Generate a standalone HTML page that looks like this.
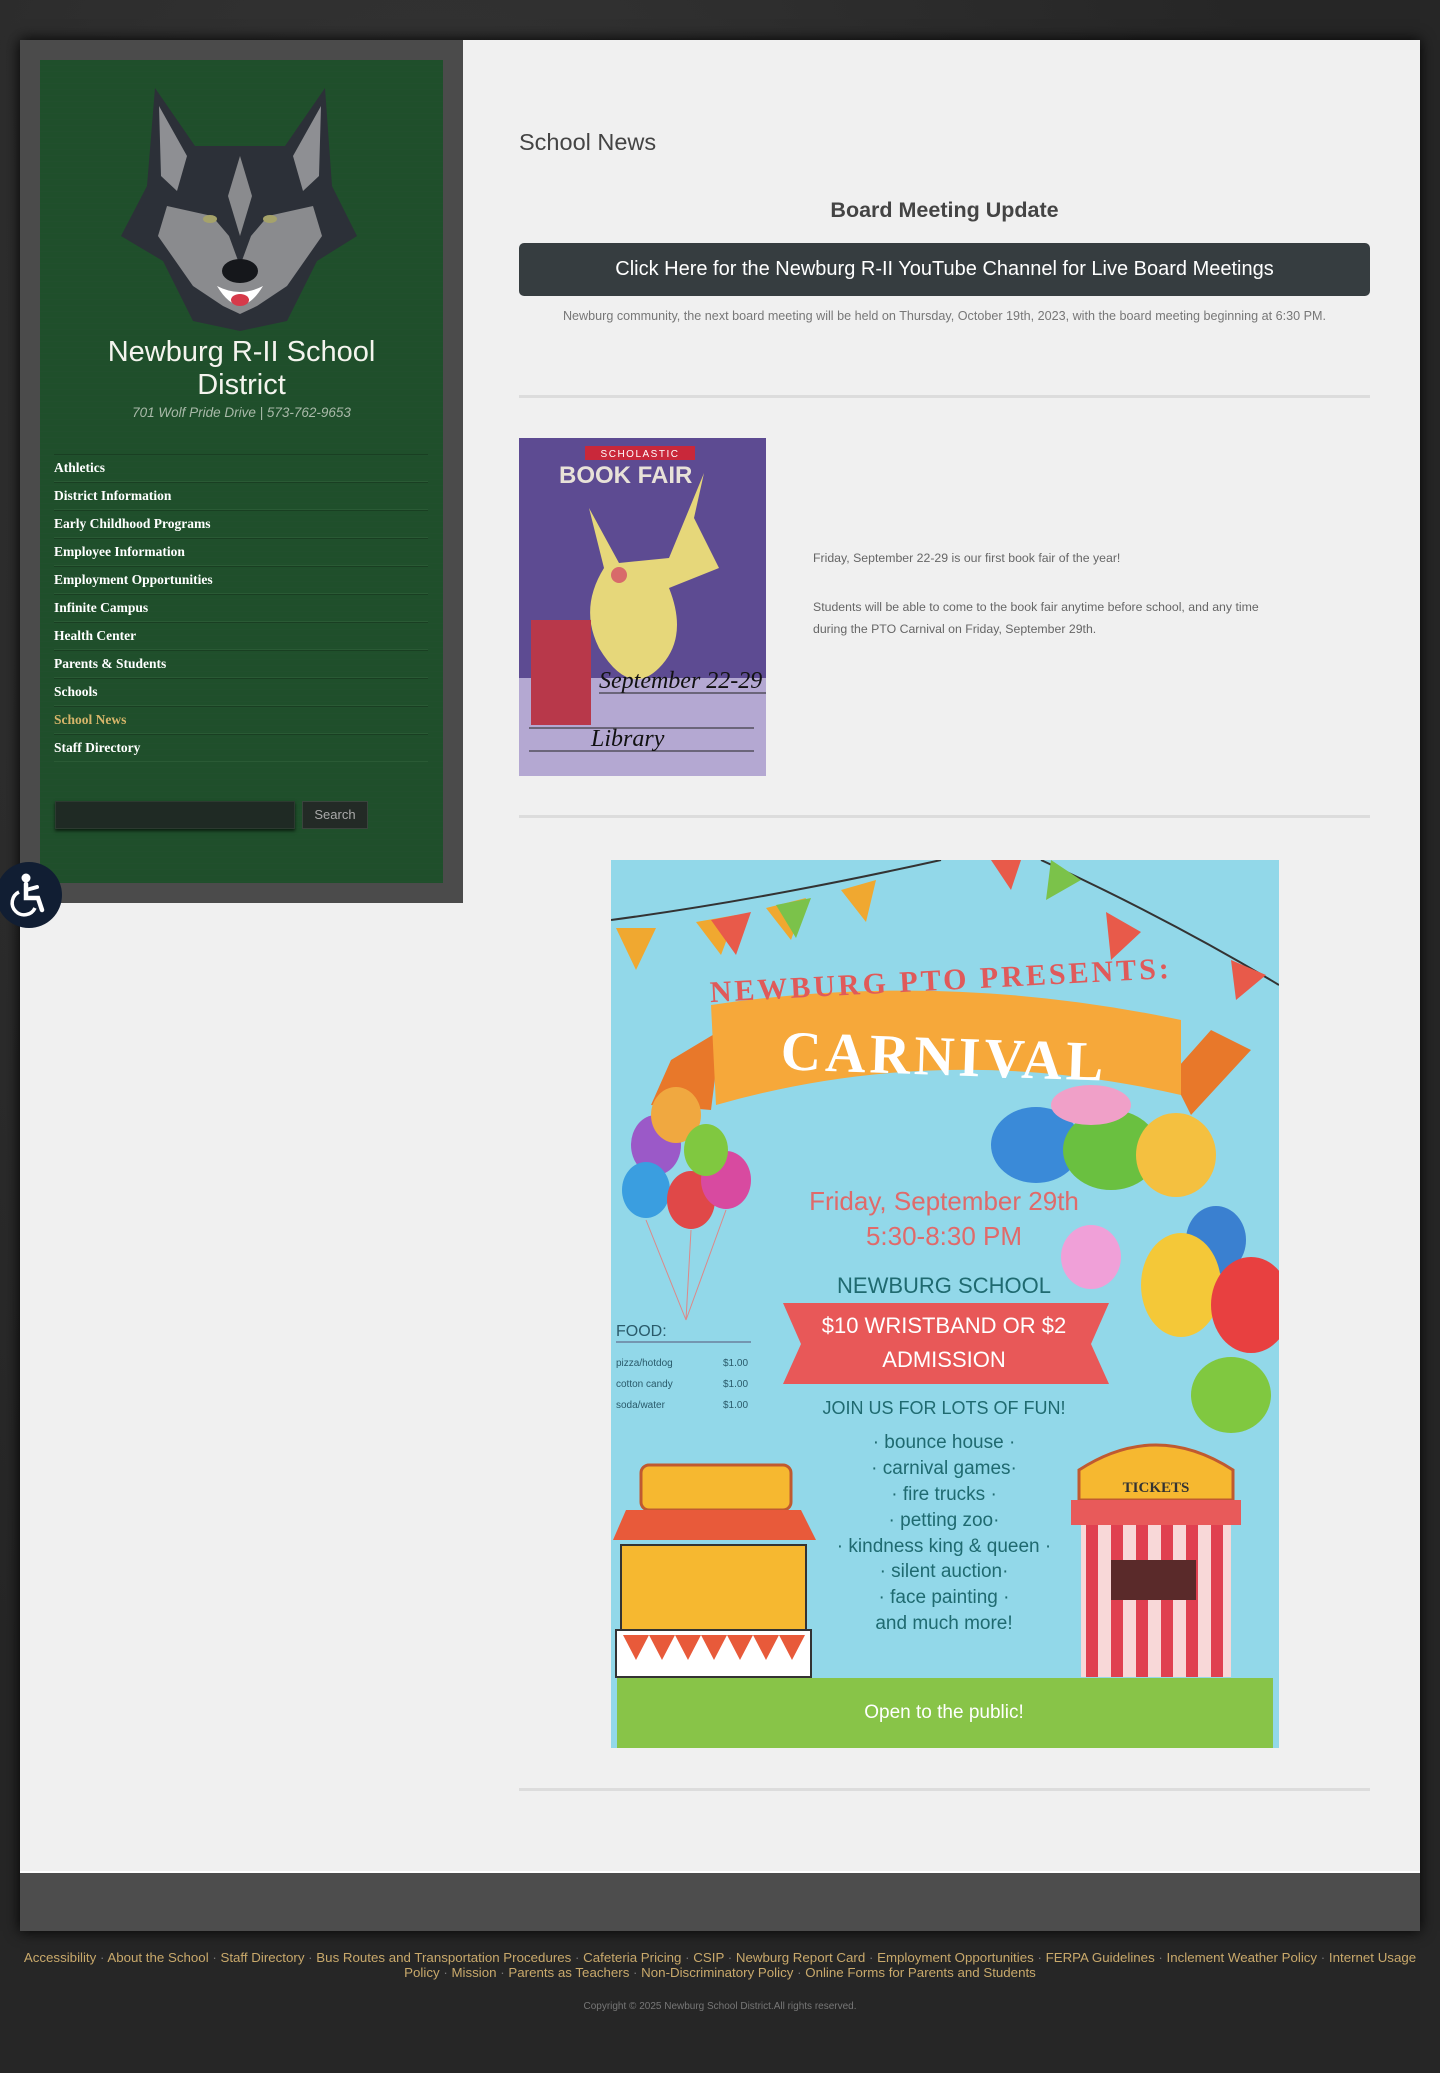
<!DOCTYPE html>
<html><head><meta charset="utf-8">
<style>
*{margin:0;padding:0;box-sizing:border-box}
html,body{width:1440px;height:2073px;overflow:hidden}
body{background:#2b2b2b;background-image:radial-gradient(ellipse at 30% 20%,#353535 0,#262626 60%),linear-gradient(#2a2a2a,#2a2a2a);font-family:"Liberation Sans",sans-serif;position:relative}
.wrap{position:absolute;left:20px;top:40px;width:1400px;height:1891px;background:#f0f0f0;box-shadow:0 0 14px #000}
.side{position:absolute;left:0;top:0;width:443px;height:863px;background:#4b4b4b}
.green{position:absolute;left:20px;top:20px;width:403px;height:823px;background:#1f4f2b;background-image:repeating-linear-gradient(#1f4f2b 0,#1f4f2b 5px,#214f2d 5px,#214f2d 6px)}
.title{position:absolute;left:0;width:403px;top:276px;text-align:center;color:#f4f4ee;font-size:29px;line-height:33px}
.addr{position:absolute;left:0;width:403px;top:345px;text-align:center;color:#a9b9a9;font-size:13.5px;font-style:italic}
.menu{position:absolute;left:14px;top:394px;width:374px;list-style:none}
.menu li{height:28px;border-top:1px solid #193f22;border-bottom:1px solid #2a5a35;font-family:"Liberation Serif",serif;font-weight:bold;font-size:13.5px;color:#fff;line-height:26px}
.menu li.act{color:#d6b56a}
.sin{position:absolute;left:15px;top:741px;width:240px;height:28px;background:#1f2a24;border:1px solid #2c3a30;box-shadow:0 2px 3px #0b1f10}
.sbt{position:absolute;left:262px;top:741px;width:66px;height:28px;background:#232a26;border:1px solid #3a443d;color:#aaa;font-size:13px;text-align:center;line-height:26px}
.acc{position:absolute;left:-24px;top:822px;width:66px;height:66px;border-radius:33px;background:#111e33;}
.main{position:absolute;left:499px;top:0;width:851px}
h1{position:absolute;left:0;top:89px;font-weight:normal;font-size:23.5px;color:#444}
h2{position:absolute;left:0;width:851px;top:158px;text-align:center;font-size:21.5px;color:#444}
.btn{position:absolute;left:0;top:203px;width:851px;height:53px;background:#363d40;border-radius:5px;color:#fff;font-size:20px;text-align:center;line-height:52px}
.note{position:absolute;left:0;width:851px;top:269px;text-align:center;color:#777;font-size:12.6px}
.hr{position:absolute;left:0;width:851px;height:3px;background:#dcdcdc}
.bt{position:absolute;left:294px;color:#666;font-size:12.3px;line-height:22px}
.foot{position:absolute;left:0;top:1831px;width:1400px;height:60px;background:#4d4d4d;border-top:2px solid #fff}
.links{position:absolute;left:0;top:1950px;width:1440px;text-align:center;color:#c9a96b;font-size:13.3px;line-height:15px;padding:0 16px}
.links span{color:#777}
.copy{position:absolute;left:0;top:2001px;width:1440px;text-align:center;color:#777;font-size:10px}
</style></head><body>
<div class="wrap">
 <div class="side"><div class="green">
  <svg style="position:absolute;left:77px;top:26px" width="246" height="246" viewBox="0 0 246 246">
   <path d="M38 2 L78 60 L168 60 L208 2 L215 100 L240 150 L200 175 L170 235 L123 245 L76 235 L46 175 L4 150 L30 100 Z" fill="#2c3038"/>
   <path d="M42 20 L70 70 L60 105 L44 90 Z M204 20 L176 70 L186 105 L202 90 Z" fill="#8e8f93"/>
   <path d="M50 120 L95 130 L112 150 L123 180 L134 150 L151 130 L196 120 L205 150 L170 200 L140 220 L123 228 L106 220 L76 200 L41 150 Z" fill="#8a8b8e"/>
   <path d="M123 70 L135 110 L123 150 L111 110 Z" fill="#8a8b8e"/>
   <ellipse cx="123" cy="185" rx="18" ry="12" fill="#15171b"/>
   <path d="M100 200 Q123 238 146 200 Q123 212 100 200Z" fill="#fff"/>
   <ellipse cx="123" cy="214" rx="9" ry="6" fill="#d63a4a"/>
   <ellipse cx="93" cy="133" rx="7" ry="4" fill="#a5a26a"/><ellipse cx="153" cy="133" rx="7" ry="4" fill="#a5a26a"/>
  </svg>
  <div class="title">Newburg R-II School<br>District</div>
  <div class="addr">701 Wolf Pride Drive | 573-762-9653</div>
  <ul class="menu">
   <li>Athletics</li><li>District Information</li><li>Early Childhood Programs</li><li>Employee Information</li><li>Employment Opportunities</li><li>Infinite Campus</li><li>Health Center</li><li>Parents &amp; Students</li><li>Schools</li><li class="act">School News</li><li>Staff Directory</li>
  </ul>
  <div class="sin"></div><div class="sbt">Search</div>
 </div></div>
 <div class="acc"><svg style="position:absolute;left:13px;top:10px" width="40" height="46" viewBox="0 0 40 46"><circle cx="17" cy="6" r="4.5" fill="#fff"/><path d="M17 12 L17 26 L29 26 L33 38" stroke="#fff" stroke-width="4.5" fill="none" stroke-linecap="round"/><path d="M17 18 L28 15" stroke="#fff" stroke-width="4" stroke-linecap="round"/><path d="M10 20 A12 12 0 1 0 26 36" stroke="#fff" stroke-width="3.5" fill="none"/></svg></div>
 <div class="main">
  <h1>School News</h1>
  <h2>Board Meeting Update</h2>
  <div class="btn">Click Here for the Newburg R-II YouTube Channel for Live Board Meetings</div>
  <div class="note">Newburg community, the next board meeting will be held on Thursday, October 19th, 2023, with the board meeting beginning at 6:30 PM.</div>
  <div class="hr" style="top:355px"></div>
  <svg style="position:absolute;left:0;top:398px" width="247" height="338" viewBox="0 0 247 338">
   <rect width="247" height="338" fill="#5d4b92"/>
   <rect x="0" y="240" width="247" height="98" fill="#b4a8d2"/>
   <rect x="66" y="8" width="110" height="14" fill="#c9283a"/>
   <text x="121" y="19" text-anchor="middle" font-size="10" fill="#fff" letter-spacing="1.5" font-family="Liberation Sans">SCHOLASTIC</text>
   <text x="40" y="45" font-size="24" font-weight="bold" fill="#e8e2d8" font-family="Liberation Sans">BOOK FAIR</text>
   <path d="M70 70 L85 130 Q60 170 80 210 Q110 260 140 230 Q170 200 150 150 L200 130 L175 80 L185 35 L150 120 L100 125 Z" fill="#e6d77a"/>
   <circle cx="100" cy="137" r="8" fill="#d86a6a"/>
   <rect x="12" y="182" width="60" height="105" fill="#b8384a"/>
   <text x="80" y="250" font-size="24" fill="#111" font-family="Liberation Serif" font-style="italic">September 22-29</text>
   <line x1="80" y1="255" x2="247" y2="255" stroke="#222"/>
   <line x1="10" y1="290" x2="235" y2="290" stroke="#222"/><line x1="10" y1="313" x2="235" y2="313" stroke="#222"/>
   <text x="72" y="308" font-size="24" fill="#111" font-family="Liberation Serif" font-style="italic">Library</text>
  </svg>
  <div class="bt" style="top:507px">Friday, September 22-29 is our first book fair of the year!</div>
  <div class="bt" style="top:556px">Students will be able to come to the book fair anytime before school, and any time<br>during the PTO Carnival on Friday, September 29th.</div>
  <div class="hr" style="top:775px"></div>
  <svg style="position:absolute;left:92px;top:820px" width="668" height="888" viewBox="0 0 668 888" font-family="Liberation Sans">
   <rect width="668" height="888" fill="#92d8e9"/>
   <path d="M0 60 Q150 40 330 0 M430 0 Q560 60 668 125" stroke="#333" stroke-width="2" fill="none"/>
   <path d="M5 68 L45 68 L25 110Z M85 62 L125 55 L110 95Z M155 48 L195 38 L180 80Z M230 30 L265 20 L255 62Z" fill="#f0a830"/>
   <path d="M100 60 L140 52 L125 95Z M380 0 L410 0 L400 30Z M495 52 L530 72 L500 100Z M620 100 L655 115 L625 140Z" fill="#e85a4a"/>
   <path d="M440 0 L470 20 L435 40Z M165 45 L200 38 L185 78Z" fill="#7bc24a"/>
   <path d="M60 200 L110 170 L100 250 L40 245Z M600 170 L640 190 L580 255 L560 215Z" fill="#e8782a"/>
   <path d="M100 145 Q333 110 570 160 L570 235 Q333 180 105 245 Z" fill="#f6a83a"/>
   <text x="330" y="130" text-anchor="middle" font-size="30" font-weight="bold" fill="#e05a5a" font-family="Liberation Serif" letter-spacing="3" transform="rotate(-3 330 125)">NEWBURG PTO PRESENTS:</text>
   <text x="333" y="215" text-anchor="middle" font-size="56" font-weight="bold" fill="#fff" font-family="Liberation Serif" letter-spacing="4" transform="rotate(2 333 200)">CARNIVAL</text>
   <g>
    <ellipse cx="45" cy="285" rx="25" ry="30" fill="#9b59c8"/><ellipse cx="65" cy="255" rx="25" ry="28" fill="#f0a840"/>
    <ellipse cx="35" cy="330" rx="24" ry="28" fill="#3a9ee0"/><ellipse cx="80" cy="340" rx="24" ry="29" fill="#e04848"/>
    <ellipse cx="115" cy="320" rx="25" ry="29" fill="#d84aa0"/><ellipse cx="95" cy="290" rx="22" ry="26" fill="#80c840"/>
    <path d="M80 370 L75 460 M35 360 L75 460 M115 350 L75 460" stroke="#d88" fill="none"/>
    <ellipse cx="425" cy="285" rx="45" ry="38" fill="#3a8ad8"/><ellipse cx="500" cy="290" rx="48" ry="40" fill="#6ac040"/>
    <ellipse cx="565" cy="295" rx="40" ry="42" fill="#f4c040"/><ellipse cx="480" cy="245" rx="40" ry="20" fill="#f0a0c8"/>
    <ellipse cx="480" cy="397" rx="30" ry="32" fill="#f0a0d8"/><ellipse cx="605" cy="380" rx="30" ry="34" fill="#3a80d0"/>
    <ellipse cx="570" cy="425" rx="40" ry="52" fill="#f4c838"/><ellipse cx="640" cy="445" rx="40" ry="48" fill="#e84040"/>
    <ellipse cx="620" cy="535" rx="40" ry="38" fill="#80c840"/>
   </g>
   <text x="333" y="350" text-anchor="middle" font-size="26" fill="#e06a6a">Friday, September 29th</text>
   <text x="333" y="385" text-anchor="middle" font-size="26" fill="#e06a6a">5:30-8:30 PM</text>
   <text x="333" y="433" text-anchor="middle" font-size="22" fill="#1f6a70">NEWBURG SCHOOL</text>
   <path d="M172 443 L498 443 L480 484 L498 524 L172 524 L190 484Z" fill="#e85858"/>
   <text x="333" y="473" text-anchor="middle" font-size="22" fill="#fff">$10 WRISTBAND OR $2</text>
   <text x="333" y="507" text-anchor="middle" font-size="22" fill="#fff">ADMISSION</text>
   <text x="333" y="554" text-anchor="middle" font-size="18" fill="#1f6a70">JOIN US FOR LOTS OF FUN!</text>
   <g font-size="19" fill="#1f6a70" text-anchor="middle">
    <text x="333" y="588">· bounce house ·</text><text x="333" y="614">· carnival games·</text><text x="333" y="640">· fire trucks ·</text><text x="333" y="666">· petting zoo·</text><text x="333" y="692">· kindness king &amp; queen ·</text><text x="333" y="717">· silent auction·</text><text x="333" y="743">· face painting ·</text><text x="333" y="769">and much  more!</text>
   </g>
   <text x="5" y="476" font-size="16" fill="#2a5a6a">FOOD:</text>
   <line x1="5" y1="482" x2="140" y2="482" stroke="#557"/>
   <g font-size="10" fill="#2a5a6a"><text x="5" y="506">pizza/hotdog</text><text x="5" y="527">cotton candy</text><text x="5" y="548">soda/water</text><text x="112" y="506">$1.00</text><text x="112" y="527">$1.00</text><text x="112" y="548">$1.00</text></g>
   <rect x="30" y="605" width="150" height="45" rx="8" fill="#f6b830" stroke="#c05a30" stroke-width="3"/>
   <path d="M2 680 L205 680 L190 650 L15 650Z" fill="#e85a3a"/>
   <rect x="10" y="685" width="185" height="85" fill="#f6b830" stroke="#333" stroke-width="2"/>
   <rect x="5" y="770" width="195" height="47" fill="#fff" stroke="#333" stroke-width="2"/>
   <path d="M12 775 L25 800 L38 775 L51 800 L64 775 L77 800 L90 775 L103 800 L116 775 L129 800 L142 775 L155 800 L168 775 L181 800 L194 775Z" fill="#e85a3a"/>
   <path d="M468 610 Q545 560 622 610 L622 640 L468 640Z" fill="#f6b830" stroke="#c05a30" stroke-width="3"/>
   <text x="545" y="632" text-anchor="middle" font-size="15" font-weight="bold" fill="#333" font-family="Liberation Serif">TICKETS</text>
   <rect x="460" y="640" width="170" height="25" fill="#e85a5a"/>
   <rect x="470" y="665" width="150" height="152" fill="#f8d8d8"/>
   <g fill="#e04050"><rect x="475" y="665" width="12" height="152"/><rect x="500" y="665" width="12" height="152"/><rect x="525" y="665" width="12" height="152"/><rect x="550" y="665" width="12" height="152"/><rect x="575" y="665" width="12" height="152"/><rect x="600" y="665" width="12" height="152"/></g>
   <rect x="500" y="700" width="85" height="40" fill="#5a2a2a"/>
   <rect x="6" y="818" width="656" height="70" fill="#88c448"/>
   <text x="333" y="858" text-anchor="middle" font-size="19" fill="#fff">Open to the public!</text>
  </svg>
  <div class="hr" style="top:1748px"></div>
 </div>
 <div class="foot"></div>
</div>
<div class="links">Accessibility <span>·</span> About the School <span>·</span> Staff Directory <span>·</span> Bus Routes and Transportation Procedures <span>·</span> Cafeteria Pricing <span>·</span> CSIP <span>·</span> Newburg Report Card <span>·</span> Employment Opportunities <span>·</span> FERPA Guidelines <span>·</span> Inclement Weather Policy <span>·</span> Internet Usage Policy <span>·</span> Mission <span>·</span> Parents as Teachers <span>·</span> Non-Discriminatory Policy <span>·</span> Online Forms for Parents and Students</div>
<div class="copy">Copyright © 2025 Newburg School District.All rights reserved.</div>
</body></html>
